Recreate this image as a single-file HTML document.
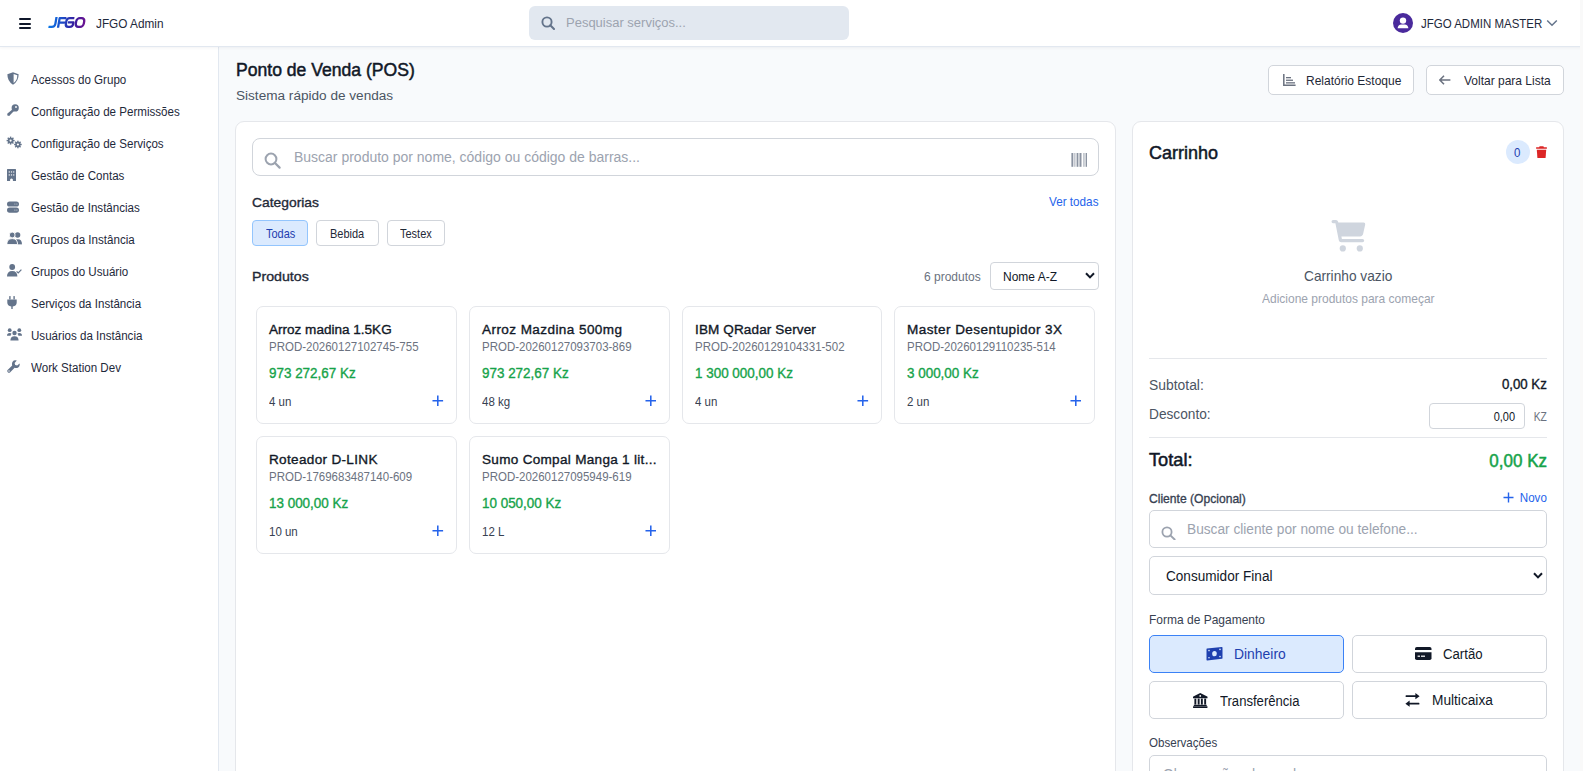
<!DOCTYPE html>
<html><head><meta charset="utf-8"><title>POS</title>
<style>
html,body{margin:0;padding:0;width:1583px;height:771px;overflow:hidden;background:#f8fafc;font-family:"Liberation Sans",sans-serif}
.t{position:absolute;white-space:nowrap;font-family:"Liberation Sans",sans-serif}
svg{display:block}
</style></head><body>
<div style="position:absolute;left:0px;top:0px;width:1583px;height:47px;box-sizing:border-box;background:#fff;border-bottom:1px solid #e2e8f0;box-shadow:0 1px 3px rgba(15,23,42,0.05);z-index:2"></div>
<div style="position:absolute;left:0px;top:47px;width:219px;height:724px;box-sizing:border-box;background:#fff;border-right:1px solid #e2e8f0"></div>
<div style="position:absolute;left:1580px;top:0px;width:3px;height:771px;box-sizing:border-box;background:#f9f9f9;z-index:3"></div>
<div style="position:absolute;left:19px;top:18px;width:12px;height:2px;box-sizing:border-box;background:#0f172a;border-radius:1px;z-index:4"></div>
<div style="position:absolute;left:19px;top:22.5px;width:12px;height:2.0px;box-sizing:border-box;background:#0f172a;border-radius:1px;z-index:4"></div>
<div style="position:absolute;left:19px;top:27px;width:12px;height:2px;box-sizing:border-box;background:#0f172a;border-radius:1px;z-index:4"></div>
<svg style="position:absolute;left:44px;top:12px;z-index:4" width="46" height="20" viewBox="0 0 46 20"><defs><linearGradient id="lg" gradientUnits="userSpaceOnUse" x1="5" y1="0" x2="41" y2="0"><stop offset="0" stop-color="#0a78e8"/><stop offset="0.38" stop-color="#1e48c4"/><stop offset="0.68" stop-color="#3520a0"/><stop offset="1" stop-color="#6c1290"/></linearGradient></defs><g transform="matrix(1 0 -0.17 1 1.785 0)" fill="none" stroke="url(#lg)" stroke-width="2.3" stroke-linejoin="round"><path d="M11.6 5 V11.8 Q11.6 14.85 8.6 14.85 H5.2"/><path d="M14.9 15.8 V6.15 H21.6 M14.9 10.6 H21"/><path d="M29.6 6.15 H25 Q22.1 6.15 22.1 9.2 V11.8 Q22.1 14.85 25 14.85 H26.6 Q29.4 14.85 29.4 12 V10.4 H23.9"/><rect x="32" y="6.15" width="8" height="8.7" rx="3"/></g></svg>
<div class="t" style="left:95.5px;top:18.29px;font-size:12.95px;line-height:12.95px;font-weight:400;color:#1e293b;transform:scaleX(0.9112);transform-origin:0 0;z-index:4;">JFGO Admin</div>
<div style="position:absolute;left:529px;top:6px;width:320px;height:34px;box-sizing:border-box;background:#e2e8f0;border-radius:6px;z-index:4"></div>
<svg style="position:absolute;left:541px;top:16px;z-index:4;" width="14" height="14" viewBox="0 0 14 14" preserveAspectRatio="none"><circle cx="6" cy="6" r="4.6" fill="none" stroke="#64748b" stroke-width="1.9"/><path d="M9.3 9.3 L13 13" stroke="#64748b" stroke-width="2" stroke-linecap="round"/></svg>
<div class="t" style="left:566.4px;top:16.38px;font-size:13.67px;line-height:13.67px;font-weight:400;color:#9ca3af;transform:scaleX(0.9511);transform-origin:0 0;z-index:4;">Pesquisar serviços...</div>
<svg style="position:absolute;left:1393px;top:13px;z-index:4;" width="20" height="20" viewBox="0 0 20 20" preserveAspectRatio="none"><circle cx="10" cy="10" r="10" fill="#4a2a9c"/><circle cx="10" cy="7.6" r="3.2" fill="#fff"/><path d="M4.6 15.2 Q5 11.4 8.4 11.4 L11.6 11.4 Q15 11.4 15.4 15.2 Z" fill="#fff"/></svg>
<div class="t" style="left:1421px;top:17.89px;font-size:12.95px;line-height:12.95px;font-weight:400;color:#1e293b;transform:scaleX(0.8881);transform-origin:0 0;z-index:4;">JFGO ADMIN MASTER</div>
<svg style="position:absolute;left:1546px;top:19px;z-index:4;" width="12" height="8" viewBox="0 0 12 8" preserveAspectRatio="none"><path d="M1.2 1.5 L6 6.3 L10.8 1.5" fill="none" stroke="#64748b" stroke-width="1.5"/></svg>
<div class="t" style="left:31.2px;top:72.87px;font-size:13.09px;line-height:13.09px;font-weight:400;color:#1e293b;transform:scaleX(0.8859);transform-origin:0 0;">Acessos do Grupo</div>
<div class="t" style="left:31.2px;top:104.87px;font-size:13.09px;line-height:13.09px;font-weight:400;color:#1e293b;transform:scaleX(0.8859);transform-origin:0 0;">Configuração de Permissões</div>
<div class="t" style="left:31.2px;top:136.87px;font-size:13.09px;line-height:13.09px;font-weight:400;color:#1e293b;transform:scaleX(0.8859);transform-origin:0 0;">Configuração de Serviços</div>
<div class="t" style="left:31.2px;top:168.87px;font-size:13.09px;line-height:13.09px;font-weight:400;color:#1e293b;transform:scaleX(0.8859);transform-origin:0 0;">Gestão de Contas</div>
<div class="t" style="left:31.2px;top:200.87px;font-size:13.09px;line-height:13.09px;font-weight:400;color:#1e293b;transform:scaleX(0.8859);transform-origin:0 0;">Gestão de Instâncias</div>
<div class="t" style="left:31.2px;top:232.87px;font-size:13.09px;line-height:13.09px;font-weight:400;color:#1e293b;transform:scaleX(0.8859);transform-origin:0 0;">Grupos da Instância</div>
<div class="t" style="left:31.2px;top:264.87px;font-size:13.09px;line-height:13.09px;font-weight:400;color:#1e293b;transform:scaleX(0.8859);transform-origin:0 0;">Grupos do Usuário</div>
<div class="t" style="left:31.2px;top:296.87px;font-size:13.09px;line-height:13.09px;font-weight:400;color:#1e293b;transform:scaleX(0.8859);transform-origin:0 0;">Serviços da Instância</div>
<div class="t" style="left:31.2px;top:328.87px;font-size:13.09px;line-height:13.09px;font-weight:400;color:#1e293b;transform:scaleX(0.8859);transform-origin:0 0;">Usuários da Instância</div>
<div class="t" style="left:31.2px;top:360.87px;font-size:13.09px;line-height:13.09px;font-weight:400;color:#1e293b;transform:scaleX(0.8859);transform-origin:0 0;">Work Station Dev</div>
<svg style="position:absolute;left:7px;top:72px;" width="12" height="13" viewBox="0 0 12 13" preserveAspectRatio="none"><path d="M6 0.3 L11.6 2.3 Q11.8 9.2 6 12.7 Q0.2 9.2 0.4 2.3 Z" fill="#64748b"/><path d="M6.6 2 L10.3 3.3 Q10.3 8.6 6.6 11 Z" fill="#fff"/></svg>
<svg style="position:absolute;left:7px;top:104px;" width="12" height="13" viewBox="0 0 12 13" preserveAspectRatio="none"><circle cx="8.2" cy="3.9" r="3.6" fill="#64748b"/><circle cx="9" cy="3" r="0.9" fill="#fff"/><path d="M5.6 5.2 L7.2 6.8 L2.2 12 L0.4 11.6 L0.2 9.8 Z" fill="#64748b"/></svg>
<svg style="position:absolute;left:6px;top:136px;" width="17" height="13" viewBox="0 0 17 13" preserveAspectRatio="none"><g fill="#64748b"><circle cx="4.6" cy="4.6" r="2.9"/><rect x="3.9" y="0.6" width="1.4" height="8"/><rect x="0.6" y="3.9" width="8" height="1.4"/><rect x="3.9" y="0.6" width="1.4" height="8" transform="rotate(45 4.6 4.6)"/><rect x="3.9" y="0.6" width="1.4" height="8" transform="rotate(-45 4.6 4.6)"/><circle cx="11.9" cy="8.5" r="2.7"/><rect x="11.2" y="4.7" width="1.4" height="7.6"/><rect x="8.1" y="7.8" width="7.6" height="1.4"/><rect x="11.2" y="4.7" width="1.4" height="7.6" transform="rotate(45 11.9 8.5)"/><rect x="11.2" y="4.7" width="1.4" height="7.6" transform="rotate(-45 11.9 8.5)"/></g><circle cx="4.6" cy="4.6" r="1.1" fill="#fff"/><circle cx="11.9" cy="8.5" r="1.1" fill="#fff"/></svg>
<svg style="position:absolute;left:7px;top:168.5px;" width="9" height="12.0" viewBox="0 0 9 12" preserveAspectRatio="none"><path d="M0.6 0 H8.4 Q9 0 9 0.6 V12 H5.9 V10.4 Q4.5 8.8 3.1 10.4 V12 H0 V0.6 Q0 0 0.6 0 Z" fill="#64748b"/><g fill="#fff"><rect x="1.7" y="2.4" width="1.2" height="1.1"/><rect x="3.9" y="2.4" width="1.2" height="1.1"/><rect x="6.1" y="2.4" width="1.2" height="1.1"/><rect x="1.7" y="5.4" width="1.2" height="1.1"/><rect x="3.9" y="5.4" width="1.2" height="1.1"/><rect x="6.1" y="5.4" width="1.2" height="1.1"/></g></svg>
<svg style="position:absolute;left:7px;top:200.5px;" width="12" height="12.0" viewBox="0 0 12 12" preserveAspectRatio="none"><rect x="0" y="0.4" width="12" height="5.2" rx="2.6" fill="#64748b"/><rect x="0" y="6.5" width="12" height="5.2" rx="2.6" fill="#64748b"/><g fill="#fff" opacity="0.7"><circle cx="7.9" cy="3" r="0.55"/><circle cx="9.9" cy="3" r="0.55"/><circle cx="7.9" cy="9.1" r="0.55"/><circle cx="9.9" cy="9.1" r="0.55"/></g></svg>
<svg style="position:absolute;left:7px;top:232px;" width="15" height="13" viewBox="0 0 15 13" preserveAspectRatio="none"><circle cx="10.6" cy="3" r="2.7" fill="#64748b"/><path d="M7 12.6 Q7 7.2 11 7.2 Q15 7.2 15 12.6 Z" fill="#64748b"/><circle cx="5.2" cy="3" r="2.9" fill="#64748b" stroke="#fff" stroke-width="0.9"/><path d="M-0.2 12.6 Q-0.2 6.6 5.2 6.6 Q10.6 6.6 10.6 12.6 Z" fill="#64748b" stroke="#fff" stroke-width="0.9"/><rect x="0" y="12.7" width="15" height="1" fill="#fff"/></svg>
<svg style="position:absolute;left:7px;top:264px;" width="15" height="13" viewBox="0 0 15 13" preserveAspectRatio="none"><circle cx="5.2" cy="3" r="2.9" fill="#64748b"/><path d="M0 12.6 Q0 7 5.2 7 Q10.4 7 10.4 12.6 Z" fill="#64748b"/><path d="M9.6 7.4 L11.2 9 L14.4 5.6" fill="none" stroke="#64748b" stroke-width="1.2"/></svg>
<svg style="position:absolute;left:7px;top:296px;" width="10" height="13" viewBox="0 0 10 13" preserveAspectRatio="none"><rect x="2.2" y="0" width="1.4" height="3.6" rx="0.6" fill="#64748b"/><rect x="6.4" y="0" width="1.4" height="3.6" rx="0.6" fill="#64748b"/><path d="M0.3 3.6 H9.7 V6.4 Q9.7 9.8 5.7 10.4 V13 H4.3 V10.4 Q0.3 9.8 0.3 6.4 Z" fill="#64748b"/></svg>
<svg style="position:absolute;left:7px;top:328px;" width="15" height="13" viewBox="0 0 15 13" preserveAspectRatio="none"><circle cx="2.7" cy="2.2" r="1.9" fill="#64748b"/><circle cx="12.3" cy="2.2" r="1.9" fill="#64748b"/><circle cx="7.5" cy="5" r="2.2" fill="#64748b"/><path d="M0 7.8 Q0 5 2.7 5 Q4 5 4.6 5.8 Q3.6 6.8 3.6 7.8 Z" fill="#64748b"/><path d="M15 7.8 Q15 5 12.3 5 Q11 5 10.4 5.8 Q11.4 6.8 11.4 7.8 Z" fill="#64748b"/><path d="M3.4 12.6 Q3.4 8.2 7.5 8.2 Q11.6 8.2 11.6 12.6 Z" fill="#64748b"/></svg>
<svg style="position:absolute;left:7px;top:360px;" width="13" height="13" viewBox="0 0 13 13" preserveAspectRatio="none"><path d="M12.6 3.4 L10.2 5.6 L8.2 5 L7.6 3 L9.8 0.6 Q7 -0.2 5.6 1.8 Q4.6 3.4 5.2 5.4 L0.6 10 Q-0.2 11.2 0.8 12.2 Q1.8 13.2 3 12.4 L7.6 7.8 Q9.6 8.4 11.2 7.4 Q13.2 6.2 12.6 3.4 Z" fill="#64748b"/><circle cx="2" cy="11" r="0.7" fill="#fff"/></svg>
<div style="position:absolute;left:219px;top:47px;width:1361px;height:724px;box-sizing:border-box;background:#f8fafc;z-index:0"></div>
<div class="t" style="left:235.5px;top:61.19px;font-size:18.13px;line-height:18.13px;font-weight:400;color:#111827;-webkit-text-stroke:0.5px currentColor;transform:scaleX(0.9708);transform-origin:0 0;">Ponto de Venda (POS)</div>
<div class="t" style="left:235.5px;top:88.78px;font-size:13.67px;line-height:13.67px;font-weight:400;color:#4b5563;transform:scaleX(0.9949);transform-origin:0 0;">Sistema rápido de vendas</div>
<div style="position:absolute;left:1268px;top:65px;width:146px;height:30px;box-sizing:border-box;background:#fff;border:1px solid #d1d5db;border-radius:5px"></div>
<svg style="position:absolute;left:1283px;top:74px;" width="13" height="12" viewBox="0 0 13 12" preserveAspectRatio="none"><path d="M0.8 0 V11.2 H12.6" fill="none" stroke="#6b7280" stroke-width="1.5"/><rect x="3" y="3" width="5" height="1.3" fill="#6b7280"/><rect x="3" y="5.6" width="7" height="1.3" fill="#6b7280"/><rect x="3" y="8.2" width="9" height="1.3" fill="#6b7280"/></svg>
<div class="t" style="left:1306px;top:74.66px;font-size:12.52px;line-height:12.52px;font-weight:400;color:#1f2937;transform:scaleX(0.9586);transform-origin:0 0;">Relatório Estoque</div>
<div style="position:absolute;left:1426px;top:65px;width:138px;height:30px;box-sizing:border-box;background:#fff;border:1px solid #d1d5db;border-radius:5px"></div>
<svg style="position:absolute;left:1439px;top:75px;" width="12" height="10" viewBox="0 0 12 10" preserveAspectRatio="none"><path d="M5 0.8 L0.9 5 L5 9.2 M1 5 H11.4" fill="none" stroke="#6b7280" stroke-width="1.5"/></svg>
<div class="t" style="left:1463.7px;top:74.66px;font-size:12.52px;line-height:12.52px;font-weight:400;color:#1f2937;transform:scaleX(0.9586);transform-origin:0 0;">Voltar para Lista</div>
<div style="position:absolute;left:235px;top:121px;width:881px;height:670px;box-sizing:border-box;background:#fff;border:1px solid #e5e7eb;border-radius:9px"></div>
<div style="position:absolute;left:252px;top:138px;width:847px;height:38px;box-sizing:border-box;border:1px solid #d1d5db;border-radius:8px;background:#fff"></div>
<svg style="position:absolute;left:264px;top:152px;" width="17" height="17" viewBox="0 0 17 17" preserveAspectRatio="none"><circle cx="7" cy="7" r="5.4" fill="none" stroke="#9ca3af" stroke-width="2"/><path d="M11 11 L15.6 15.6" stroke="#9ca3af" stroke-width="2.2" stroke-linecap="round"/></svg>
<div class="t" style="left:293.8px;top:149.77px;font-size:14.39px;line-height:14.39px;font-weight:400;color:#9ca3af;transform:scaleX(0.9730);transform-origin:0 0;">Buscar produto por nome, código ou código de barras...</div>
<svg style="position:absolute;left:1070.5px;top:153px;" width="16.5" height="13.800000000000011" viewBox="0 0 16.5 13.8" preserveAspectRatio="none"><rect x="0.4" y="0" width="1.9" height="13.8" fill="#8b93a1"/><rect x="3.5" y="0" width="0.8" height="13.8" fill="#8b93a1"/><rect x="5.6" y="0" width="1.8" height="13.8" fill="#8b93a1"/><rect x="8.5" y="0" width="2" height="13.8" fill="#8b93a1"/><rect x="12.5" y="0" width="0.9" height="13.8" fill="#8b93a1"/><rect x="14.6" y="0" width="1.7" height="13.8" fill="#8b93a1"/></svg>
<div class="t" style="left:252.3px;top:196.25px;font-size:13.24px;line-height:13.24px;font-weight:400;color:#1f2937;-webkit-text-stroke:0.35px currentColor;transform:scaleX(1.0463);transform-origin:0 0;">Categorias</div>
<div class="t" style="right:484.5999999999999px;top:196.14px;font-size:12.66px;line-height:12.66px;font-weight:400;color:#2563eb;transform:scaleX(0.9240);transform-origin:100% 0;">Ver todas</div>
<div style="position:absolute;left:252px;top:220px;width:56px;height:26px;box-sizing:border-box;background:#dbeafe;border:1px solid #93c5fd;border-radius:4px"></div>
<div class="t" style="left:265.6px;top:227.72px;font-size:12.09px;line-height:12.09px;font-weight:400;color:#1e40af;transform:scaleX(0.9101);transform-origin:0 0;">Todas</div>
<div style="position:absolute;left:316px;top:220px;width:63px;height:26px;box-sizing:border-box;background:#fff;border:1px solid #d1d5db;border-radius:4px"></div>
<div class="t" style="left:330.2px;top:227.72px;font-size:12.09px;line-height:12.09px;font-weight:400;color:#1f2937;transform:scaleX(0.9101);transform-origin:0 0;">Bebida</div>
<div style="position:absolute;left:387px;top:220px;width:58px;height:26px;box-sizing:border-box;background:#fff;border:1px solid #d1d5db;border-radius:4px"></div>
<div class="t" style="left:400.2px;top:227.72px;font-size:12.09px;line-height:12.09px;font-weight:400;color:#1f2937;transform:scaleX(0.9101);transform-origin:0 0;">Testex</div>
<div class="t" style="left:252.3px;top:269.90px;font-size:13.53px;line-height:13.53px;font-weight:400;color:#1f2937;-webkit-text-stroke:0.35px currentColor;transform:scaleX(1.0499);transform-origin:0 0;">Produtos</div>
<div class="t" style="left:923.5px;top:270.35px;font-size:13.24px;line-height:13.24px;font-weight:400;color:#6b7280;transform:scaleX(0.9065);transform-origin:0 0;">6 produtos</div>
<div style="position:absolute;left:990px;top:262px;width:109px;height:28px;box-sizing:border-box;background:#fff;border:1px solid #d1d5db;border-radius:4px"></div>
<div class="t" style="left:1003px;top:270.35px;font-size:13.24px;line-height:13.24px;font-weight:400;color:#111827;transform:scaleX(0.9065);transform-origin:0 0;">Nome A-Z</div>
<svg style="position:absolute;left:1085px;top:272px;" width="10" height="7" viewBox="0 0 10 7" preserveAspectRatio="none"><path d="M1 1.2 L5 5.4 L9 1.2" fill="none" stroke="#111827" stroke-width="2"/></svg>
<div style="position:absolute;left:256.4px;top:306.2px;width:200.5px;height:117.40000000000003px;box-sizing:border-box;background:#fff;border:1px solid #e5e7eb;border-radius:7px"></div>
<div class="t" style="left:269.4px;top:322.70px;font-size:13.53px;line-height:13.53px;font-weight:400;color:#111827;-webkit-text-stroke:0.35px currentColor;transform:scaleX(1.0018);transform-origin:0 0;">Arroz madina 1.5KG</div>
<div class="t" style="left:269.4px;top:341.14px;font-size:12.66px;line-height:12.66px;font-weight:400;color:#6b7280;transform:scaleX(0.9082);transform-origin:0 0;">PROD-20260127102745-755</div>
<div class="t" style="left:269.4px;top:366.66px;font-size:13.81px;line-height:13.81px;font-weight:400;color:#16a34a;-webkit-text-stroke:0.35px currentColor;transform:scaleX(0.9737);transform-origin:0 0;">973 272,67 Kz</div>
<div class="t" style="left:269.4px;top:395.89px;font-size:12.37px;line-height:12.37px;font-weight:400;color:#374151;transform:scaleX(0.9294);transform-origin:0 0;">4 un</div>
<svg style="position:absolute;left:432.0px;top:395.2px;" width="11.599999999999966" height="11.400000000000034" viewBox="0 0 12 12" preserveAspectRatio="none"><path d="M6 0.5 V11.5 M0.5 6 H11.5" stroke="#2563eb" stroke-width="1.6"/></svg>
<div style="position:absolute;left:469.2px;top:306.2px;width:200.50000000000006px;height:117.40000000000003px;box-sizing:border-box;background:#fff;border:1px solid #e5e7eb;border-radius:7px"></div>
<div class="t" style="left:482.2px;top:322.70px;font-size:13.53px;line-height:13.53px;font-weight:400;color:#111827;letter-spacing:0.419px;-webkit-text-stroke:0.35px currentColor;transform:scaleX(1.0018);transform-origin:0 0;">Arroz Mazdina 500mg</div>
<div class="t" style="left:482.2px;top:341.14px;font-size:12.66px;line-height:12.66px;font-weight:400;color:#6b7280;transform:scaleX(0.9082);transform-origin:0 0;">PROD-20260127093703-869</div>
<div class="t" style="left:482.2px;top:366.66px;font-size:13.81px;line-height:13.81px;font-weight:400;color:#16a34a;-webkit-text-stroke:0.35px currentColor;transform:scaleX(0.9737);transform-origin:0 0;">973 272,67 Kz</div>
<div class="t" style="left:482.2px;top:395.89px;font-size:12.37px;line-height:12.37px;font-weight:400;color:#374151;transform:scaleX(0.9294);transform-origin:0 0;">48 kg</div>
<svg style="position:absolute;left:644.8px;top:395.2px;" width="11.600000000000023" height="11.400000000000034" viewBox="0 0 12 12" preserveAspectRatio="none"><path d="M6 0.5 V11.5 M0.5 6 H11.5" stroke="#2563eb" stroke-width="1.6"/></svg>
<div style="position:absolute;left:681.5px;top:306.2px;width:200.5px;height:117.40000000000003px;box-sizing:border-box;background:#fff;border:1px solid #e5e7eb;border-radius:7px"></div>
<div class="t" style="left:694.5px;top:322.70px;font-size:13.53px;line-height:13.53px;font-weight:400;color:#111827;letter-spacing:0.120px;-webkit-text-stroke:0.35px currentColor;transform:scaleX(1.0018);transform-origin:0 0;">IBM QRadar Server</div>
<div class="t" style="left:694.5px;top:341.14px;font-size:12.66px;line-height:12.66px;font-weight:400;color:#6b7280;transform:scaleX(0.9082);transform-origin:0 0;">PROD-20260129104331-502</div>
<div class="t" style="left:694.5px;top:366.66px;font-size:13.81px;line-height:13.81px;font-weight:400;color:#16a34a;-webkit-text-stroke:0.35px currentColor;transform:scaleX(0.9737);transform-origin:0 0;">1 300 000,00 Kz</div>
<div class="t" style="left:694.5px;top:395.89px;font-size:12.37px;line-height:12.37px;font-weight:400;color:#374151;transform:scaleX(0.9294);transform-origin:0 0;">4 un</div>
<svg style="position:absolute;left:857.1px;top:395.2px;" width="11.600000000000023" height="11.400000000000034" viewBox="0 0 12 12" preserveAspectRatio="none"><path d="M6 0.5 V11.5 M0.5 6 H11.5" stroke="#2563eb" stroke-width="1.6"/></svg>
<div style="position:absolute;left:894.3px;top:306.2px;width:200.5px;height:117.40000000000003px;box-sizing:border-box;background:#fff;border:1px solid #e5e7eb;border-radius:7px"></div>
<div class="t" style="left:907.3px;top:322.70px;font-size:13.53px;line-height:13.53px;font-weight:400;color:#111827;letter-spacing:0.429px;-webkit-text-stroke:0.35px currentColor;transform:scaleX(1.0018);transform-origin:0 0;">Master Desentupidor 3X</div>
<div class="t" style="left:907.3px;top:341.14px;font-size:12.66px;line-height:12.66px;font-weight:400;color:#6b7280;transform:scaleX(0.9082);transform-origin:0 0;">PROD-20260129110235-514</div>
<div class="t" style="left:907.3px;top:366.66px;font-size:13.81px;line-height:13.81px;font-weight:400;color:#16a34a;-webkit-text-stroke:0.35px currentColor;transform:scaleX(0.9737);transform-origin:0 0;">3 000,00 Kz</div>
<div class="t" style="left:907.3px;top:395.89px;font-size:12.37px;line-height:12.37px;font-weight:400;color:#374151;transform:scaleX(0.9294);transform-origin:0 0;">2 un</div>
<svg style="position:absolute;left:1069.8999999999999px;top:395.2px;" width="11.600000000000136" height="11.400000000000034" viewBox="0 0 12 12" preserveAspectRatio="none"><path d="M6 0.5 V11.5 M0.5 6 H11.5" stroke="#2563eb" stroke-width="1.6"/></svg>
<div style="position:absolute;left:256.4px;top:436.2px;width:200.5px;height:117.40000000000003px;box-sizing:border-box;background:#fff;border:1px solid #e5e7eb;border-radius:7px"></div>
<div class="t" style="left:269.4px;top:452.70px;font-size:13.53px;line-height:13.53px;font-weight:400;color:#111827;letter-spacing:0.329px;-webkit-text-stroke:0.35px currentColor;transform:scaleX(1.0018);transform-origin:0 0;">Roteador D-LINK</div>
<div class="t" style="left:269.4px;top:471.14px;font-size:12.66px;line-height:12.66px;font-weight:400;color:#6b7280;transform:scaleX(0.9082);transform-origin:0 0;">PROD-1769683487140-609</div>
<div class="t" style="left:269.4px;top:496.66px;font-size:13.81px;line-height:13.81px;font-weight:400;color:#16a34a;-webkit-text-stroke:0.35px currentColor;transform:scaleX(0.9737);transform-origin:0 0;">13 000,00 Kz</div>
<div class="t" style="left:269.4px;top:525.89px;font-size:12.37px;line-height:12.37px;font-weight:400;color:#374151;transform:scaleX(0.9294);transform-origin:0 0;">10 un</div>
<svg style="position:absolute;left:432.0px;top:525.2px;" width="11.599999999999966" height="11.399999999999977" viewBox="0 0 12 12" preserveAspectRatio="none"><path d="M6 0.5 V11.5 M0.5 6 H11.5" stroke="#2563eb" stroke-width="1.6"/></svg>
<div style="position:absolute;left:469.2px;top:436.2px;width:200.50000000000006px;height:117.40000000000003px;box-sizing:border-box;background:#fff;border:1px solid #e5e7eb;border-radius:7px"></div>
<div class="t" style="left:482.2px;top:452.70px;font-size:13.53px;line-height:13.53px;font-weight:400;color:#111827;letter-spacing:0.299px;-webkit-text-stroke:0.35px currentColor;transform:scaleX(1.0018);transform-origin:0 0;">Sumo Compal Manga 1 lit...</div>
<div class="t" style="left:482.2px;top:471.14px;font-size:12.66px;line-height:12.66px;font-weight:400;color:#6b7280;transform:scaleX(0.9082);transform-origin:0 0;">PROD-20260127095949-619</div>
<div class="t" style="left:482.2px;top:496.66px;font-size:13.81px;line-height:13.81px;font-weight:400;color:#16a34a;-webkit-text-stroke:0.35px currentColor;transform:scaleX(0.9737);transform-origin:0 0;">10 050,00 Kz</div>
<div class="t" style="left:482.2px;top:525.89px;font-size:12.37px;line-height:12.37px;font-weight:400;color:#374151;transform:scaleX(0.9294);transform-origin:0 0;">12 L</div>
<svg style="position:absolute;left:644.8px;top:525.2px;" width="11.600000000000023" height="11.399999999999977" viewBox="0 0 12 12" preserveAspectRatio="none"><path d="M6 0.5 V11.5 M0.5 6 H11.5" stroke="#2563eb" stroke-width="1.6"/></svg>
<div style="position:absolute;left:1132px;top:121px;width:432px;height:670px;box-sizing:border-box;background:#fff;border:1px solid #e5e7eb;border-radius:9px"></div>
<div class="t" style="left:1149.2px;top:143.64px;font-size:18.42px;line-height:18.42px;font-weight:400;color:#111827;-webkit-text-stroke:0.5px currentColor;transform:scaleX(0.9773);transform-origin:0 0;">Carrinho</div>
<div style="position:absolute;left:1505.5px;top:140px;width:24.0px;height:24px;box-sizing:border-box;background:#dbeafe;border-radius:50%"></div>
<div class="t" style="left:1514.2px;top:146.25px;font-size:13.24px;line-height:13.24px;font-weight:400;color:#1e40af;transform:scaleX(0.8688);transform-origin:0 0;">0</div>
<svg style="position:absolute;left:1536px;top:145.5px;" width="11" height="12.800000000000011" viewBox="0 0 11 13" preserveAspectRatio="none"><path d="M3.6 0.3 H7.4 L7.9 1.3 H10.6 Q11 1.3 11 1.8 V2.4 Q11 2.9 10.6 2.9 H0.4 Q0 2.9 0 2.4 V1.8 Q0 1.3 0.4 1.3 H3.1 Z" fill="#dc2626"/><path d="M0.8 3.8 H10.2 L9.6 12 Q9.5 13 8.5 13 H2.5 Q1.5 13 1.4 12 Z" fill="#dc2626"/></svg>
<svg style="position:absolute;left:1331px;top:220px;" width="35" height="32" viewBox="0 0 35 32" preserveAspectRatio="none"><path d="M0.5 1.6 Q0.5 0 2 0 H5 Q6.6 0 7 1.6 L7.3 2.5 H32.6 Q34.6 2.5 34.2 4.6 L32.2 13.6 Q31.7 16.4 29 16.4 H10.4 L10.9 19 H31.5 Q33.2 19 33.2 20.6 Q33.2 22.2 31.5 22.2 H10.2 Q8.2 22.2 7.8 20.2 L4.4 3.2 H2 Q0.5 3.2 0.5 1.6 Z" fill="#cfd5de"/><circle cx="11.8" cy="28.4" r="3.1" fill="#cfd5de"/><circle cx="28.8" cy="28.4" r="3.1" fill="#cfd5de"/></svg>
<div class="t" style="left:1303.8px;top:269.21px;font-size:14.1px;line-height:14.1px;font-weight:400;color:#4b5563;transform:scaleX(0.9716);transform-origin:0 0;">Carrinho vazio</div>
<div class="t" style="left:1262px;top:292.69px;font-size:12.37px;line-height:12.37px;font-weight:400;color:#9ca3af;transform:scaleX(0.9698);transform-origin:0 0;">Adicione produtos para começar</div>
<div style="position:absolute;left:1149px;top:358px;width:398px;height:1px;box-sizing:border-box;background:#e5e7eb"></div>
<div class="t" style="left:1149px;top:378.27px;font-size:14.39px;line-height:14.39px;font-weight:400;color:#4b5563;transform:scaleX(0.9660);transform-origin:0 0;">Subtotal:</div>
<div class="t" style="right:36.299999999999955px;top:378.36px;font-size:13.81px;line-height:13.81px;font-weight:400;color:#111827;-webkit-text-stroke:0.35px currentColor;transform:scaleX(0.9592);transform-origin:100% 0;">0,00 Kz</div>
<div class="t" style="left:1149px;top:406.51px;font-size:14.1px;line-height:14.1px;font-weight:400;color:#4b5563;transform:scaleX(0.9716);transform-origin:0 0;">Desconto:</div>
<div style="position:absolute;left:1429px;top:403px;width:96px;height:26px;box-sizing:border-box;background:#fff;border:1px solid #d1d5db;border-radius:4px"></div>
<div class="t" style="right:67.70000000000005px;top:410.69px;font-size:12.37px;line-height:12.37px;font-weight:400;color:#111827;transform:scaleX(0.8890);transform-origin:100% 0;">0,00</div>
<div class="t" style="right:36.299999999999955px;top:410.69px;font-size:12.37px;line-height:12.37px;font-weight:400;color:#6b7280;transform:scaleX(0.8324);transform-origin:100% 0;">KZ</div>
<div style="position:absolute;left:1149px;top:437px;width:398px;height:1px;box-sizing:border-box;background:#e5e7eb"></div>
<div class="t" style="left:1149px;top:451.75px;font-size:17.7px;line-height:17.7px;font-weight:400;color:#111827;-webkit-text-stroke:0.5px currentColor;transform:scaleX(1.0284);transform-origin:0 0;">Total:</div>
<div class="t" style="right:36.299999999999955px;top:452.21px;font-size:17.99px;line-height:17.99px;font-weight:400;color:#16a34a;-webkit-text-stroke:0.5px currentColor;transform:scaleX(0.9452);transform-origin:100% 0;">0,00 Kz</div>
<div class="t" style="left:1149.2px;top:492.45px;font-size:13.24px;line-height:13.24px;font-weight:400;color:#374151;-webkit-text-stroke:0.35px currentColor;transform:scaleX(0.9141);transform-origin:0 0;">Cliente (Opcional)</div>
<svg style="position:absolute;left:1503px;top:492.4px;" width="11" height="11.0" viewBox="0 0 11 11" preserveAspectRatio="none"><path d="M5.5 0.5 V10.5 M0.5 5.5 H10.5" stroke="#2563eb" stroke-width="1.4"/></svg>
<div class="t" style="right:36px;top:492.39px;font-size:12.37px;line-height:12.37px;font-weight:400;color:#2563eb;transform:scaleX(0.9374);transform-origin:100% 0;">Novo</div>
<div style="position:absolute;left:1149px;top:510px;width:398px;height:38px;box-sizing:border-box;background:#fff;border:1px solid #d1d5db;border-radius:5px"></div>
<svg style="position:absolute;left:1160.5px;top:526px;" width="15.0" height="14" viewBox="0 0 15 14" preserveAspectRatio="none"><circle cx="6" cy="6" r="4.6" fill="none" stroke="#9ca3af" stroke-width="1.8"/><path d="M9.4 9.4 L13.6 13.4" stroke="#9ca3af" stroke-width="2" stroke-linecap="round"/></svg>
<div class="t" style="left:1186.5px;top:522.30px;font-size:14.24px;line-height:14.24px;font-weight:400;color:#9ca3af;transform:scaleX(0.9618);transform-origin:0 0;">Buscar cliente por nome ou telefone...</div>
<div style="position:absolute;left:1149px;top:556px;width:398px;height:38.5px;box-sizing:border-box;background:#fff;border:1px solid #d1d5db;border-radius:5px"></div>
<div class="t" style="left:1166.1px;top:569.96px;font-size:13.81px;line-height:13.81px;font-weight:400;color:#111827;transform:scaleX(0.9846);transform-origin:0 0;">Consumidor Final</div>
<svg style="position:absolute;left:1533px;top:572px;" width="10" height="7" viewBox="0 0 10 7" preserveAspectRatio="none"><path d="M1 1.2 L5 5.4 L9 1.2" fill="none" stroke="#111827" stroke-width="2"/></svg>
<div class="t" style="left:1149px;top:614.14px;font-size:12.66px;line-height:12.66px;font-weight:400;color:#374151;transform:scaleX(0.9477);transform-origin:0 0;">Forma de Pagamento</div>
<div style="position:absolute;left:1149px;top:635px;width:195px;height:38px;box-sizing:border-box;background:#dbeafe;border:1px solid #3b82f6;border-radius:5px"></div>
<svg style="position:absolute;left:1205.5px;top:647px;" width="17.0" height="13.5" viewBox="0 0 17 13.5" preserveAspectRatio="none"><path d="M0.5 2 Q0.5 1.6 1 1.5 L15.8 0 Q16.5 0 16.5 0.6 V11.2 Q16.5 11.6 16 11.7 L1.2 13.4 Q0.5 13.5 0.5 12.8 Z" fill="#1e40af"/><ellipse cx="8.5" cy="6.7" rx="2.3" ry="2.6" fill="#dbeafe"/><g fill="#dbeafe"><circle cx="3" cy="3.6" r="0.8"/><circle cx="14" cy="2.4" r="0.8"/><circle cx="3" cy="10.8" r="0.8"/><circle cx="14" cy="9.6" r="0.8"/></g></svg>
<div class="t" style="left:1234.3px;top:648.13px;font-size:13.96px;line-height:13.96px;font-weight:400;color:#1e40af;transform:scaleX(0.9959);transform-origin:0 0;">Dinheiro</div>
<div style="position:absolute;left:1352px;top:635px;width:195px;height:38px;box-sizing:border-box;background:#fff;border:1px solid #d1d5db;border-radius:5px"></div>
<svg style="position:absolute;left:1415px;top:647.3px;" width="16.5" height="13.0" viewBox="0 0 16.5 13" preserveAspectRatio="none"><path d="M1.8 0 H14.7 Q16.5 0 16.5 1.8 V3 H0 V1.8 Q0 0 1.8 0 Z" fill="#111827"/><path d="M0 5.2 H16.5 V11.2 Q16.5 13 14.7 13 H1.8 Q0 13 0 11.2 Z" fill="#111827"/><rect x="2.6" y="8.6" width="2.4" height="1.2" fill="#fff"/><rect x="6" y="8.6" width="4" height="1.2" fill="#fff"/></svg>
<div class="t" style="left:1443.2px;top:648.06px;font-size:13.81px;line-height:13.81px;font-weight:400;color:#111827;transform:scaleX(0.9556);transform-origin:0 0;">Cartão</div>
<div style="position:absolute;left:1149px;top:681px;width:195px;height:38px;box-sizing:border-box;background:#fff;border:1px solid #d1d5db;border-radius:5px"></div>
<svg style="position:absolute;left:1193px;top:692.5px;" width="14.5" height="15.0" viewBox="0 0 14.5 15" preserveAspectRatio="none"><path d="M7.25 0 L14.2 3.4 Q14.5 3.6 14.5 4 V5.2 H0 V4 Q0 3.6 0.3 3.4 Z" fill="#111827"/><circle cx="7.25" cy="2.9" r="0.9" fill="#fff"/><g fill="#111827"><rect x="1.4" y="5.6" width="1.9" height="6"/><rect x="4.7" y="5.6" width="1.9" height="6"/><rect x="7.9" y="5.6" width="1.9" height="6"/><rect x="11.2" y="5.6" width="1.9" height="6"/><rect x="0.8" y="11.8" width="12.9" height="1.2"/><rect x="0" y="13.2" width="14.5" height="1.8" rx="0.4"/></g></svg>
<div class="t" style="left:1219.7px;top:693.50px;font-size:14.24px;line-height:14.24px;font-weight:400;color:#111827;transform:scaleX(0.9196);transform-origin:0 0;">Transferência</div>
<div style="position:absolute;left:1352px;top:681px;width:195px;height:38px;box-sizing:border-box;background:#fff;border:1px solid #d1d5db;border-radius:5px"></div>
<svg style="position:absolute;left:1405px;top:693px;" width="15" height="14" viewBox="0 0 15 14" preserveAspectRatio="none"><g fill="#111827"><rect x="0.6" y="2.3" width="10.6" height="1.7" rx="0.5"/><path d="M10.4 0 L14.6 3.15 L10.4 6.3 Z"/><rect x="3.8" y="9.8" width="10.6" height="1.7" rx="0.5"/><path d="M4.6 7.5 L0.4 10.65 L4.6 13.8 Z"/></g></svg>
<div class="t" style="left:1431.8px;top:693.86px;font-size:13.81px;line-height:13.81px;font-weight:400;color:#111827;transform:scaleX(0.9918);transform-origin:0 0;">Multicaixa</div>
<div class="t" style="left:1149px;top:737.49px;font-size:12.37px;line-height:12.37px;font-weight:400;color:#374151;transform:scaleX(0.9374);transform-origin:0 0;">Observações</div>
<div style="position:absolute;left:1149px;top:755px;width:398px;height:56px;box-sizing:border-box;background:#fff;border:1px solid #d1d5db;border-radius:5px"></div>
<div class="t" style="left:1163.2px;top:767.40px;font-size:14.24px;line-height:14.24px;font-weight:400;color:#9ca3af;transform:scaleX(0.9618);transform-origin:0 0;">Observações da venda...</div>
</body></html>
